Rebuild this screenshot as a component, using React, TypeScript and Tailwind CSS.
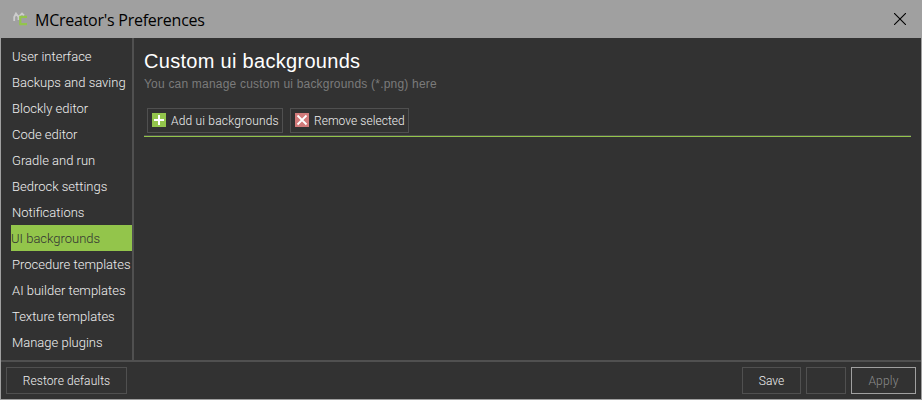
const items = [
  { label: 'User interface' },
  { label: 'Backups and saving' },
  { label: 'Blockly editor' },
  { label: 'Code editor' },
  { label: 'Gradle and run' },
  { label: 'Bedrock settings' },
  { label: 'Notifications' },
  { label: 'UI backgrounds', active: true },
  { label: 'Procedure templates' },
  { label: 'AI builder templates' },
  { label: 'Texture templates' },
  { label: 'Manage plugins' },
];

function Logo() {
  return (
    <svg width="16" height="16" viewBox="0 0 16 16" fill="none">
      <path d="M1.2 9V5L3 1.5L5.5 5L9 1.5L11 3.5M5.5 5V8" stroke="#cdcdcd" strokeWidth="1.8" />
      <path d="M14 4.8H7.3V12.2H14" stroke="#93c54b" strokeWidth="2.2" />
    </svg>
  );
}

export default function App() {
  return (
    <div className="flex h-[400px] w-[922px] flex-col overflow-hidden border border-[#a0a0a0] bg-[#323232] font-['Roboto',sans-serif] text-[13px] font-light text-[#f0f0f0]">
      <header className="flex h-[37px] shrink-0 items-center bg-[#a0a0a0] pl-3 pr-[15px]">
        <Logo />
        <h1 className="ml-[6px] flex-1 font-['Open_Sans',sans-serif] text-[16px] leading-[38px] font-normal tracking-[-0.25px] text-black">
          MCreator's Preferences
        </h1>
        <svg className="-mt-px" width="12" height="12" viewBox="0 0 12 12" stroke="#000" strokeWidth="1.1">
          <path d="M0 0L12 12M12 0L0 12" />
        </svg>
      </header>
      <div className="flex min-h-0 flex-1">
        <nav className="w-[133px] shrink-0 border-r-2 border-[#505050] pt-[5px] pl-[10px]">
          {items.map((i) => (
            <div
              key={i.label}
              className={`h-[26px] leading-[27px] whitespace-nowrap ${i.active ? 'bg-[#93c54b] text-[#323232]' : 'pl-px'}`}
            >
              {i.label}
            </div>
          ))}
        </nav>
        <main className="flex-1 pt-[10px] pr-[10px] pl-[10px] font-['Liberation_Sans',sans-serif] font-normal">
          <h2 className="h-[27px] text-[20px] leading-[27px] tracking-[0.3px] text-white">Custom ui backgrounds</h2>
          <p className="h-[18px] text-[12px] leading-[18px] tracking-[0.2px] text-[#7b7b7b]">
            You can manage custom ui backgrounds (*.png) here
          </p>
          <div className="mt-[11px] border-b border-[#93c54b]">
            <div className="flex h-[32px] gap-[7px] border-b border-[#505050] pt-1 pl-[3px] font-['Roboto',sans-serif] text-[12px] font-light">
              <button className="flex h-[25px] w-[136px] items-center border border-[#505050] pl-1">
                <svg className="-mt-px" width="14" height="14" viewBox="0 0 14 14">
                  <rect width="14" height="14" fill="#93c54b" />
                  <path d="M7 2V12M2 7H12" stroke="#fff" strokeWidth="2" />
                </svg>
                <span className="ml-[5px] whitespace-nowrap tracking-[0.2px]">Add ui backgrounds</span>
              </button>
              <button className="flex h-[25px] w-[119px] items-center border border-[#505050] pl-1">
                <svg className="-mt-px" width="14" height="14" viewBox="0 0 14 14">
                  <rect width="14" height="14" fill="#d27a7a" />
                  <path d="M2.5 2.5L11.5 11.5M11.5 2.5L2.5 11.5" stroke="#fff" strokeWidth="1.8" />
                </svg>
                <span className="ml-[5px] whitespace-nowrap tracking-[0.05px]">Remove selected</span>
              </button>
            </div>
          </div>
        </main>
      </div>
      <footer className="flex h-[39px] shrink-0 border-t-2 border-[#505050] pt-[5px] pr-[5px] pl-[5px] text-[12px]">
        <button className="h-[27px] w-[121px] border border-[#505050] tracking-[0.1px]">Restore defaults</button>
        <div className="flex-1" />
        <button className="h-[27px] w-[59px] border border-[#505050]">Save</button>
        <button className="ml-[5px] h-[27px] w-[40px] border border-[#505050]" />
        <button className="ml-[5px] h-[27px] w-[65px] border border-[#a0a0a0] tracking-[0.2px] text-[#8c8c8c]">Apply</button>
      </footer>
    </div>
  );
}
